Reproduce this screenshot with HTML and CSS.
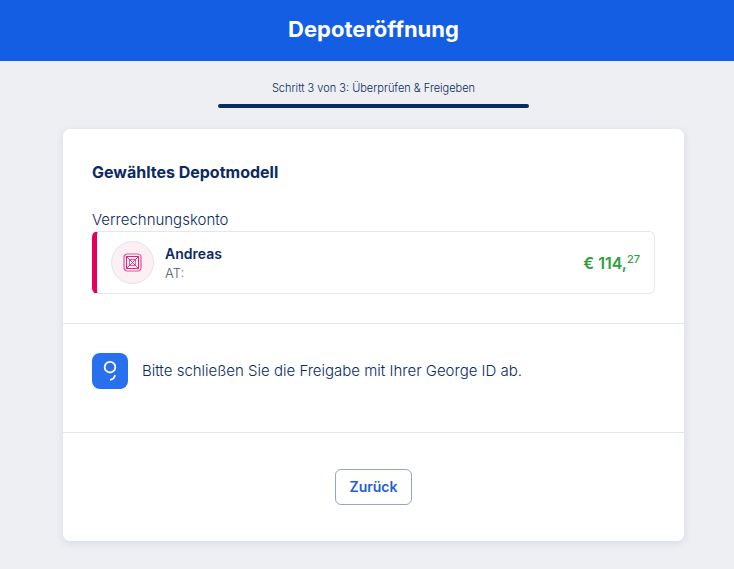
FILE: index.html
```html
<!DOCTYPE html>
<html lang="de">

<head>
    <meta charset="utf-8">
    <meta name="viewport" content="width=device-width, initial-scale=1">
    <title>Depoteröffnung</title>
    <link rel="stylesheet" href="styles.css">
</head>

<body>
    <header class="page-header">
        <h1>Depoteröffnung</h1>
    </header>

    <main class="content">
        <div class="step">
            <p class="step-label">Schritt 3 von 3: Überprüfen &amp; Freigeben</p>
            <div class="step-bar"></div>
        </div>

        <div class="card">
            <section class="card-section">
                <h2>Gewähltes Depotmodell</h2>
                <p class="field-label">Verrechnungskonto</p>
                <div class="account">
                    <span class="account-icon">
                        <svg width="19" height="19" viewBox="0 0 19 19" fill="none" stroke="#e5217a">
                            <rect x="1" y="1" width="17" height="17" rx="3.5" stroke="#d8589a" stroke-width="1.2"/>
                            <rect x="3.5" y="3.5" width="12" height="12"/>
                            <path d="M3.5 3.5l12 12M15.5 3.5l-12 12" stroke-width=".9"/>
                            <path d="M7 6.5h5l.5.5v5l-.5.5H7l-.5-.5V7z" stroke-width=".7"/>
                        </svg>
                    </span>
                    <div class="account-info">
                        <p class="account-name">Andreas</p>
                        <p class="account-iban">AT:</p>
                    </div>
                    <p class="account-balance">€ 114,<sup>27</sup></p>
                </div>
            </section>

            <section class="card-section approval">
                <svg class="george-logo" width="36" height="36" viewBox="0 0 36 36" fill="none" stroke="#fff" stroke-width="1.8">
                    <rect width="36" height="36" rx="8" fill="#2870ed" stroke="none"/>
                    <circle cx="18" cy="14.2" r="5.3"/>
                    <path d="M23 22.2c-.4 2.6-2 4.300-5 4.600"/>
                </svg>
                <p>Bitte schließen Sie die Freigabe mit Ihrer George ID ab.</p>
            </section>

            <section class="card-section actions">
                <button type="button" class="back-button">Zurück</button>
            </section>
        </div>
    </main>
</body>

</html>
```

FILE: styles.css
```css
* {
    box-sizing: border-box;
}

body {
    margin: 0;
    background-color: #edeff3;
    color: #0b2a63;
    font-family: Inter, "Liberation Sans", sans-serif;
    font-size: 14px;
    line-height: 20px;
}

h1,
h2,
p {
    margin: 0;
}

.page-header {
    padding: 13px 0 16px 13px;
    background-color: #145ee3;
    color: white;
    text-align: center;
}

.page-header h1 {
    font-size: 22px;
    line-height: 32px;
    font-weight: 700;
}

.content {
    padding: 19px 50px 28px 63px;
}

.step {
    width: 50%;
    margin: 0 auto 21px;
    text-align: center;
}

.step-label {
    font-size: 11px;
    line-height: 16px;
    font-weight: 300;
    white-space: nowrap;
}

.step-bar {
    height: 4px;
    margin-top: 8px;
    border-radius: 2px;
    background-color: #0b2a63;
}

.card {
    border-radius: 7px;
    background-color: white;
    box-shadow: 0 2px 8px rgba(11, 42, 99, 0.1);
}

.card-section {
    padding: 29px;
}

.card-section + .card-section {
    border-top: 1px solid #e4e7ee;
}

.card-section h2 {
    margin: 4px 0 28px;
    font-size: 16px;
    line-height: 20px;
    font-weight: 700;
}

.field-label {
    padding-bottom: 1px;
    font-size: 15px;
    font-weight: 300;
}

.account {
    display: flex;
    align-items: center;
    gap: 11px;
    padding: 9px 14px;
    border: 1px solid #e4e7ee;
    border-left: 5px solid #e4005b;
    border-radius: 6px;
}

.account-icon {
    display: flex;
    align-items: center;
    justify-content: center;
    width: 43px;
    height: 43px;
    border: 1px solid #e2e3ec;
    border-radius: 50%;
    background-color: #fdf0f5;
}

.account-info {
    flex: 1;
}

.account-name {
    font-weight: 600;
}

.account-iban {
    font-size: 13px;
    line-height: 18px;
    font-weight: 300;
    color: #4d5876;
}

.account-balance {
    font-size: 16px;
    font-weight: 600;
    color: #2fa03c;
}

.account-balance sup {
    font-size: 11px;
    line-height: 1px;
    font-weight: 500;
}

.approval {
    display: flex;
    align-items: center;
    gap: 14px;
    padding-bottom: 43px;
    font-size: 15px;
    font-weight: 300;
}

.actions {
    padding: 36px 29px;
    text-align: center;
}

.back-button {
    height: 36px;
    padding: 0 14px;
    border: 1px solid #96a5c6;
    border-radius: 6px;
    background-color: white;
    color: #1c5fd6;
    font: inherit;
    font-weight: 600;
    cursor: pointer;
}
```
